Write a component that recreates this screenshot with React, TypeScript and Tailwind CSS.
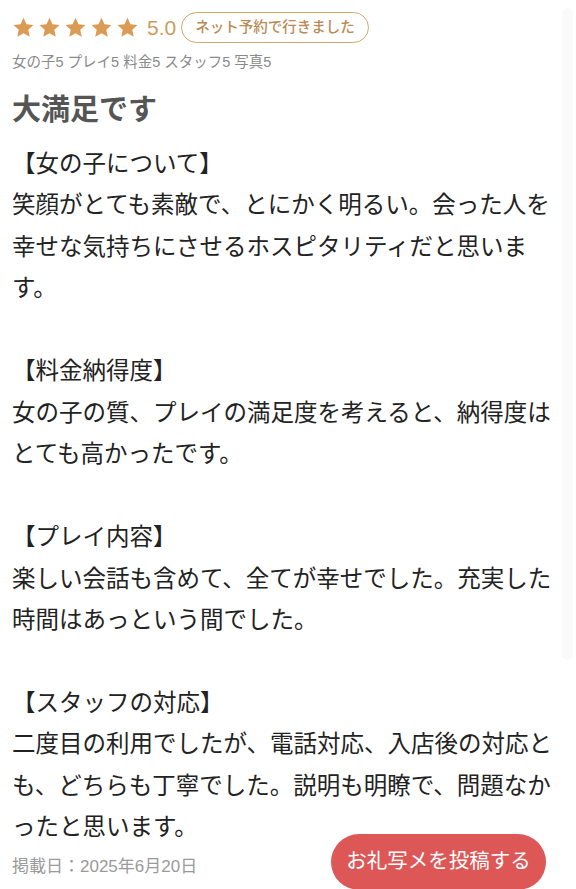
const jp = { fontFamily: '"Liberation Sans", "Noto Sans CJK JP", sans-serif' };

const body = [
  "【女の子について】",
  "笑顔がとても素敵で、とにかく明るい。会った人を幸せな気持ちにさせるホスピタリティだと思います。",
  "",
  "【料金納得度】",
  "女の子の質、プレイの満足度を考えると、納得度はとても高かったです。",
  "",
  "【プレイ内容】",
  "楽しい会話も含めて、全てが幸せでした。充実した時間はあっという間でした。",
  "",
  "【スタッフの対応】",
  "二度目の利用でしたが、電話対応、入店後の対応とも、どちらも丁寧でした。説明も明瞭で、問題なかったと思います。",
];

function Star() {
  return (
    <svg viewBox="0 0 24 24" className="size-[23px]" fill="#db9b55">
      <path d="M12 1.8l3.1 6.8 7.3.8-5.4 5 1.5 7.3L12 18l-6.5 3.7 1.5-7.3-5.4-5 7.3-.8z" />
    </svg>
  );
}

export default function App() {
  return (
    <div className="relative min-h-[889px] w-[576px] overflow-hidden bg-white" style={jp}>
      <div className="absolute right-[3px] top-[8px] h-[652px] w-[11px] rounded-full bg-[#fafafa]" />

      <div className="relative pl-3 pt-[12px]">
        <div className="flex items-center">
          <div className="flex gap-[3px]">
            <Star />
            <Star />
            <Star />
            <Star />
            <Star />
          </div>
          <span className="ml-[8px] text-[21px] leading-none text-[#cf9a5c]">5.0</span>
          <span className="ml-[5px] flex h-[31px] items-center rounded-full border-[1.5px] border-[#d3a86c] px-[13px] text-[14.5px] font-medium text-[#b88b55]">
            ネット予約で行きました
          </span>
        </div>

        <div className="mt-[8px] text-[14.5px] leading-[22px] text-[#8a8a8a]">
          女の子5 プレイ5 料金5 スタッフ5 写真5
        </div>

        <h1 className="mt-[18px] text-[29px] font-bold leading-[38px] text-[#555]">大満足です</h1>

        <div className="mt-[15px] w-[549px] text-[23.5px] leading-[41.45px] text-[#222]">
          {body.map((line, i) =>
            line === "" ? (
              <div key={i} className="h-[41.45px]" />
            ) : (
              <p key={i}>{line}</p>
            )
          )}
        </div>

        <div className="flex items-end justify-between pr-[30px]">
          <span className="mb-[10px] text-[17px] text-[#9a9a9a]">掲載日：2025年6月20日</span>
          <button
            type="button"
            className="mt-[-15px] flex h-[56px] w-[215px] items-center justify-center rounded-full bg-[#de5757] text-[20.5px] text-white"
          >
            お礼写メを投稿する
          </button>
        </div>
      </div>
    </div>
  );
}
